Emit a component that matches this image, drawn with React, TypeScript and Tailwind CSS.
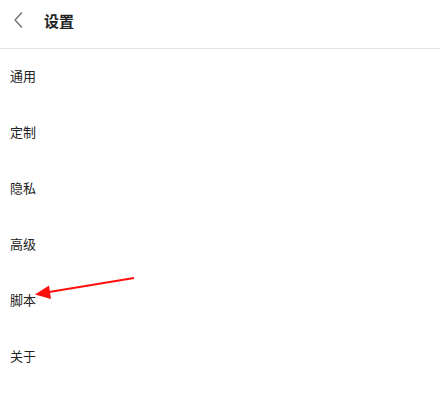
import React from "react";

const items = ["通用", "定制", "隐私", "高级", "脚本", "关于"];

export default function App() {
  return (
    <div
      className="relative w-[440px] h-[411px] bg-white text-[#222]"
      style={{ fontFamily: '"Noto Sans CJK SC", "Noto Sans", sans-serif' }}
    >
      <div className="flex items-center h-[49px] pb-[8px] border-b border-[#e5e5e5]">
        <div className="w-[44px] flex items-center justify-start pl-[12px]">
          <svg width="14" height="18" viewBox="0 0 14 18" fill="none">
            <path d="M10 1.5 L3 9 L10 16.5" stroke="#666" strokeWidth="1.2" />
          </svg>
        </div>
        <div className="text-[15px] font-bold text-[#222] leading-none">设置</div>
      </div>
      <div className="flex flex-col">
        {items.map((t) => (
          <div key={t} className="h-[56px] flex items-center pb-[4px] pl-[10px] text-[13px] text-[#222] leading-none">
            {t}
          </div>
        ))}
      </div>
      <svg
        className="absolute left-0 top-0 pointer-events-none"
        width="440"
        height="411"
        viewBox="0 0 440 411"
      >
        <line x1="134" y1="278" x2="46" y2="292.5" stroke="#ff1010" strokeWidth="2" />
        <polygon points="35,294.5 49,285.5 51,299" fill="#ff1010" />
      </svg>
    </div>
  );
}
